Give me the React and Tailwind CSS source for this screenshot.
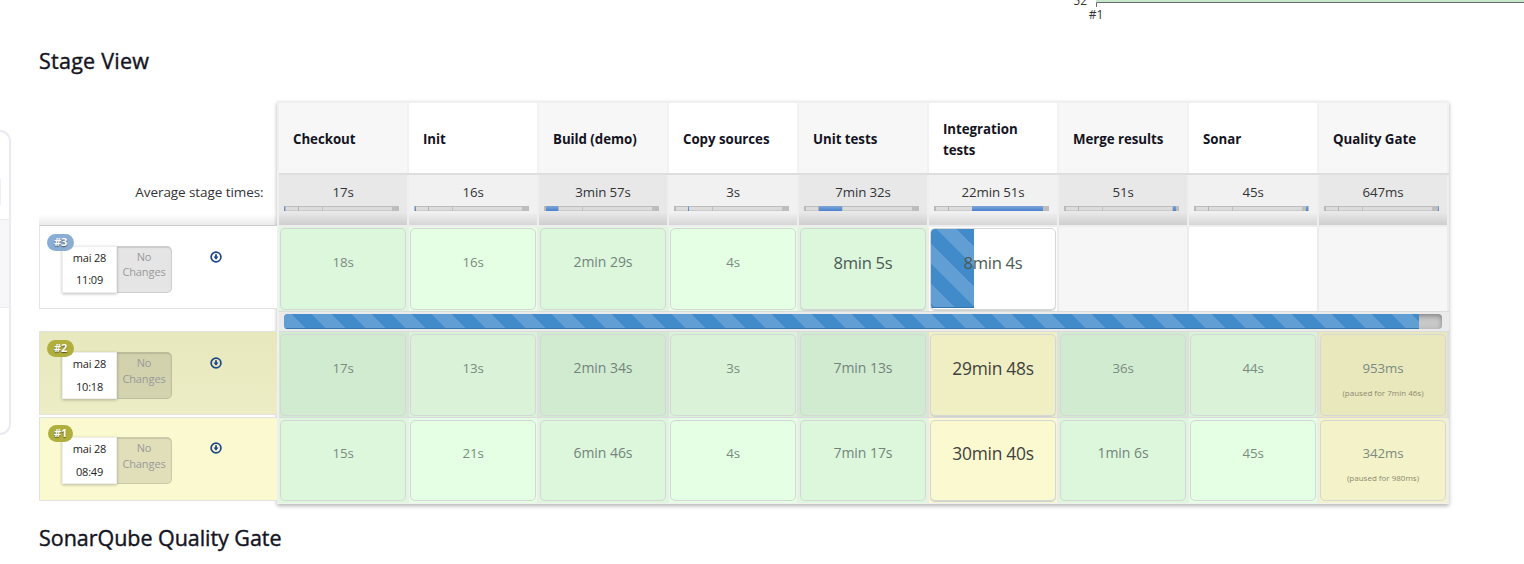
import React from "react";

const stages = [
  { name: "Checkout", avg: "17s", from: 0, width: 1 },
  { name: "Init", avg: "16s", from: 1, width: 1 },
  { name: "Build (demo)", avg: "3min 57s", from: 2, width: 12 },
  { name: "Copy sources", avg: "3s", from: 14, width: 1 },
  { name: "Unit tests", avg: "7min 32s", from: 15, width: 23 },
  { name: "Integration tests", avg: "22min 51s", from: 38, width: 71 },
  { name: "Merge results", avg: "51s", from: 109, width: 3 },
  { name: "Sonar", avg: "45s", from: 112, width: 2 },
  { name: "Quality Gate", avg: "647ms", from: 114, width: 1 },
];

const sizes = {
  s: "text-[13.3px] tracking-[-0.1px] text-[#7c8a80]",
  n: "text-[14px] tracking-[-0.05px] text-[#75837a]",
  m: "text-[16.6px] tracking-[-0.3px] text-[#4d5a54] pt-px",
  l: "text-[17.4px] tracking-[-0.25px] text-[#3f4240]",
};

const runs = [
  {
    id: "#3",
    time: "11:09",
    cells: [
      { t: "18s" }, { t: "16s" }, { t: "2min 29s", size: "n" }, { t: "4s" },
      { t: "8min 5s", size: "m" }, { t: "8min 4s", size: "m", running: true }, null, null, null,
    ],
  },
  {
    id: "#2",
    time: "10:18",
    cells: [
      { t: "17s" }, { t: "13s" }, { t: "2min 34s", size: "n" }, { t: "3s" }, { t: "7min 13s", size: "n" },
      { t: "29min 48s", size: "l", warn: true }, { t: "36s" }, { t: "44s" },
      { t: "953ms", warn: true, note: "(paused for 7min 46s)" },
    ],
  },
  {
    id: "#1",
    time: "08:49",
    cells: [
      { t: "15s" }, { t: "21s" }, { t: "6min 46s", size: "n" }, { t: "4s" }, { t: "7min 17s", size: "n" },
      { t: "30min 40s", size: "l", warn: true }, { t: "1min 6s", size: "n" }, { t: "45s" },
      { t: "342ms", warn: true, note: "(paused for 980ms)" },
    ],
  },
];

const stripes =
  "bg-[#428bca] bg-[length:40px_40px] bg-[linear-gradient(45deg,rgba(255,255,255,0.16)_25%,transparent_25%,transparent_50%,rgba(255,255,255,0.16)_50%,rgba(255,255,255,0.16)_75%,transparent_75%,transparent)]";

function StageBar({ from, width }) {
  return (
    <div className="relative mt-[4px] ml-[5px] h-[5px] w-[115px] border border-[#cbcbcb] border-t-[#bdbdbd] bg-[#dcdcdc]">
      <span className="absolute -top-px left-[-1px] h-[5px] w-[2px] bg-[#b9b9b9]" />
      <span className="absolute -top-px left-[13px] h-[5px] w-px bg-[#b3b3b3]" />
      <span className="absolute -top-px left-[37px] h-[5px] w-px bg-[#bfbfbf]" />
      <span className="absolute -top-px left-[107px] h-[5px] w-[7px] bg-[#bdbdbd]" />
      <span
        className="absolute -top-px h-[5px] bg-gradient-to-b from-[#7fa6d6] to-[#4a80d0]"
        style={{ left: from - 1, width }}
      />
    </div>
  );
}

function cellColors(row, col, cell) {
  const odd = col % 2 === 0;
  if (!cell) return odd ? "bg-[#f6f6f6]" : "bg-white";
  if (cell.running) return "bg-white";
  if (cell.warn) {
    if (row === 1) return odd ? "bg-[#e9e8bc]" : "bg-[#f0efc3]";
    return odd ? "bg-[#f4f2c8]" : "bg-[#fbf9d0]";
  }
  if (row === 1) return odd ? "bg-[#d1ebd0]" : "bg-[#d9f2d8]";
  return odd ? "bg-[#ddf7dc]" : "bg-[#e4ffe3]";
}

function Cell({ row, col, cell }) {
  const frame = row === 1 ? "border-[#dfdee2]" : "border-[#ececec]";
  const raised = cell && (cell.size === "m" || cell.size === "l");
  return (
    <div
      className={`h-full w-[130px] shrink-0 border-r-2 ${frame} ${cellColors(row, col, cell)} ${
        row === 0 ? "pt-px" : "pt-[2px]"
      }`}
    >
      {cell && (
        <div
          className={`relative ml-px w-[126px] overflow-hidden rounded-[5px] border border-[#d3d8d5] text-center ${
            row === 2 ? "h-[81px] pt-[22px]" : "h-[82px] pt-[23px]"
          } ${raised ? "shadow-[0_1px_1px_#c9cfcb]" : ""}`}
        >
          {cell.running && (
            <div className={`absolute top-0 left-0 h-[79px] w-[43px] bg-[position:6px_0px] ${stripes} shadow-[inset_0_-1px_0_#3273aa]`} />
          )}
          <div className={`relative leading-[20px] ${sizes[cell.size || "s"]}`}>{cell.t}</div>
          {cell.note && <div className="mt-[8px] text-[8px] leading-[14px] text-[#8b8b71]">{cell.note}</div>}
        </div>
      )}
    </div>
  );
}

function DownloadIcon() {
  return (
    <svg width="12" height="12" viewBox="0 0 12 12" className="mt-[5px] ml-[38px]">
      <circle cx="6" cy="6" r="4.9" fill="none" stroke="#1f4788" strokeWidth="1.7" />
      <path d="M5.100 3.200h1.800v2.300h1.600L6 8.700 3.500 5.500h1.600z" fill="#1f4788" />
    </svg>
  );
}

const rowStyles = [
  "pt-[20px] bg-white border-[#e4e4e4] border-t-[#cccccc]",
  "pt-[20px] bg-gradient-to-b from-[#e7e8be] to-[#ededc5] border-[#e2e2e0]",
  "pt-[19px] bg-[#fbf9d0] border-[#e2e2e0]",
];

function RunInfo({ run, row }) {
  return (
    <div className={`relative flex h-[84px] w-[238px] border-y border-l ${rowStyles[row]}`}>
      <div className="ml-[22px] h-[47px] w-[55px] border border-[#eee] bg-white text-center text-[11px] tracking-[-0.2px] text-[#222] shadow-[0_1px_3px_rgba(0,0,0,0.25)]">
        <div className="mt-px leading-[19px]">mai 28</div>
        <div className={`leading-[20px] ${row === 0 ? "mt-[3px]" : "mt-[4px]"}`}>{run.time}</div>
      </div>
      <div className="h-[47px] w-[55px] rounded-r-[5px] border border-l-0 border-black/10 bg-black/10 text-center text-[11px] leading-[15.5px] tracking-[-0.1px] text-[#999] shadow-[inset_0_1px_1px_rgba(0,0,0,0.12)]">
        <div className={row === 0 ? "pt-[1.5px] leading-[15px]" : "pt-[2px]"}>No<br />Changes</div>
      </div>
      <DownloadIcon />
      <span
        className={`absolute flex h-[17px] items-center justify-center rounded-full text-[11px] font-bold tracking-[-0.3px] text-white [text-shadow:0_1px_1px_rgba(0,0,0,0.5)] ${
          row === 0 ? "bg-[#8aadd4]" : "bg-[#b0ae3c]"
        } ${row === 2 ? "top-[7px] left-[8px] w-[25px]" : "top-[8px] left-[7px] w-[27px]"}`}
      >
        {run.id}
      </span>
    </div>
  );
}

function Sidebar() {
  return (
    <aside className="w-[39px] shrink-0 pt-[130px]">
      <div className="h-[305px] w-[11px] overflow-hidden rounded-r-[15px] border-y-2 border-r-2 border-[#eaeaf3]">
        <div className="mt-[47px] h-[26px] w-px bg-[#eeeef4]" />
        <div className="mt-[14px] h-[89px] w-full border-y border-[#eeeef2] bg-[#f7f7f7]" />
      </div>
    </aside>
  );
}

const heading =
  "h-[30px] text-[21.5px] leading-[30px] font-medium [-webkit-text-stroke:0.4px_#14141f]";

export default function App() {
  return (
    <div className="flex h-[564px] w-[1524px] overflow-hidden bg-white font-['Open_Sans','Noto_Sans',sans-serif] text-[#14141f]">
      <Sidebar />
      <main className="w-[1485px]">
        <svg width="1485" height="30" className="block">
          <rect x="1057" y="0" width="428" height="2" fill="#c5e8c8" />
          <path d="M1057.500 7V2.500H1485" fill="none" stroke="#6b6b78" />
          <text x="1048" y="5" textAnchor="end" fontSize="12" fill="#333">52</text>
          <text x="1057" y="18.500" textAnchor="middle" fontSize="12" fill="#333">#1</text>
        </svg>
        <h2 className={`mt-[16px] tracking-[0.250px] ${heading}`}>Stage View</h2>

        <div className="mt-[25px] flex h-[404px]">
          <div className="w-[238px] shrink-0">
            <div className="mt-[72px] h-[52px] bg-gradient-to-b from-white from-80% to-[#ebebeb] pt-[8px] pr-[13.500px] text-right text-[13.500px] leading-[22px] tracking-[-0.080px] text-[#333]">
              Average stage times:
            </div>
            <RunInfo run={runs[0]} row={0} />
            <div className="h-[22px]" />
            <RunInfo run={runs[1]} row={1} />
            <div className="h-[2px]" />
            <RunInfo run={runs[2]} row={2} />
          </div>

          <div className="h-[403px] w-[1172px] shrink-0 border-t-2 border-b border-l-2 border-[#f0f0f0] bg-[#f3f3f3] shadow-[0_2px_4px_rgba(0,0,0,0.3)]">
            <div className="flex h-[72px] border-b-2 border-[#dedede]">
              {stages.map((s, i) => (
                <div
                  key={s.name}
                  className={`flex w-[130px] shrink-0 items-center border-r-2 border-[#f2f2f2] pt-[3px] pr-[18px] pl-[14px] text-[13.300px] leading-[21px] font-bold tracking-[-0.050px] ${
                    i % 2 ? "bg-white" : "bg-[#f7f7f7]"
                  }`}
                >
                  {s.name}
                </div>
              ))}
            </div>
            <div className="flex h-[50px]">
              {stages.map((s, i) => (
                <div
                  key={s.name}
                  className={`w-[130px] shrink-0 border-r-2 border-[#eee] bg-gradient-to-b from-75% pt-[7px] ${
                    i % 2 ? "from-[#f1f1f1] to-[#d6d6d6]" : "from-[#e8e8e8] to-[#cecece]"
                  }`}
                >
                  <div className="text-center text-[13.300px] leading-[20px] tracking-[-0.100px] text-[#333]">{s.avg}</div>
                  <StageBar from={s.from} width={s.width} />
                </div>
              ))}
            </div>
            <div className="flex h-[86px] border-t-2 border-[#eee]">
              {runs[0].cells.map((c, i) => <Cell key={i} row={0} col={i} cell={c} />)}
            </div>
            <div className="h-[21px] border-y border-[#dcdcdc] bg-[#ebebeb] pt-[2px] pl-[5px]">
              <div className="h-[15px] w-[1158px] overflow-hidden rounded-[4px] bg-[#c8c8c8] shadow-[inset_0_2px_5px_rgba(0,0,0,0.35)]">
                <div className={`h-full w-[1135px] bg-[position:-12px_0px] ${stripes} shadow-[inset_0_-1px_0_#3576ac]`} />
              </div>
            </div>
            <div className="flex h-[86px] border-b border-[#ded9e0]">
              {runs[1].cells.map((c, i) => <Cell key={i} row={1} col={i} cell={c} />)}
            </div>
            <div className="flex h-[85px]">
              {runs[2].cells.map((c, i) => <Cell key={i} row={2} col={i} cell={c} />)}
            </div>
          </div>
        </div>

        <h2 className={`mt-[18px] tracking-[-0.040px] ${heading}`}>SonarQube Quality Gate</h2>
      </main>
    </div>
  );
}
